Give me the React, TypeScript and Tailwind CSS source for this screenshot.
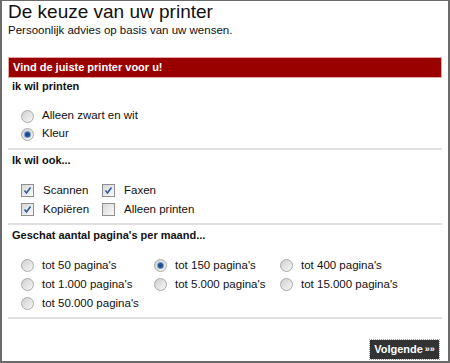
import React from 'react';

const Radio: React.FC<{ checked?: boolean }> = ({ checked }) => (
  <span className="w-[13px] h-[13px] rounded-full border border-[#a9a9a9] bg-gradient-to-br from-[#d0d0d0] to-[#f7f7f7] flex items-center justify-center shrink-0">
    {checked && <span className="w-[5px] h-[5px] rounded-full bg-[#1f4f8a] ring-1 ring-[#7a9ccb]" />}
  </span>
);

const Check: React.FC<{ checked?: boolean }> = ({ checked }) => (
  <span className="w-[13px] h-[13px] border border-[#8f8f8f] bg-gradient-to-br from-[#d8d8d8] to-[#fafafa] flex items-center justify-center shrink-0">
    {checked && (
      <svg width="9" height="9" viewBox="0 0 9 9">
        <path d="M1.5 4.5 L3.5 7 L7.5 1.5" stroke="#2f5b9a" strokeWidth="1.6" fill="none" />
      </svg>
    )}
  </span>
);

const Opt: React.FC<{ label: string; checked?: boolean; box?: boolean; h?: string }> = ({ label, checked, box, h }) => (
  <div className={`flex items-center ${box ? 'gap-[9px]' : 'gap-[8px]'} ${h ?? 'h-[19px]'}`}>
    {box ? <Check checked={checked} /> : <Radio checked={checked} />}
    <span>{label}</span>
  </div>
);

const Divider: React.FC<{ mt: string }> = ({ mt }) => <div className={`h-[2px] bg-[#e0e0e0] mx-[6px] shrink-0 ${mt}`} />;

const Heading: React.FC<{ children: React.ReactNode; mt: string }> = ({ children, mt }) => (
  <div className={`px-[10px] font-bold text-[11px] leading-[14px] ${mt}`}>{children}</div>
);

export default function App() {
  return (
    <div className="w-[450px] h-[363px] overflow-hidden bg-white border-t border-x-2 border-b-2 border-[#6b6b6b] text-[#111] text-[11.5px] font-['Liberation_Sans',Arial,sans-serif] flex flex-col">
      <div className="px-[6px] shrink-0">
        <h1 className="text-[19px] leading-[22px]">De keuze van uw printer</h1>
        <p className="leading-[14px]">Persoonlijk advies op basis van uw wensen.</p>
      </div>
      <div className="mx-[6px] mt-[20px] h-[21px] shrink-0 bg-[#990000] border border-[#e3a5a5] text-white font-bold text-[11px] px-[4px] flex items-center">
        Vind de juiste printer voor u!
      </div>
      <Heading mt="mt-[1px]">ik wil printen</Heading>
      <div className="pl-[19px] pt-[14px] flex flex-col shrink-0">
        <Opt label="Alleen zwart en wit" h="h-[18px]" />
        <Opt label="Kleur" checked h="h-[18px]" />
      </div>
      <Divider mt="mt-[5px]" />
      <Heading mt="mt-[3px]">Ik wil ook...</Heading>
      <div className="pl-[19px] pt-[14px] grid grid-cols-[81px_auto] w-fit shrink-0">
        <Opt box checked label="Scannen" />
        <Opt box checked label="Faxen" />
        <Opt box checked label="Kopiëren" />
        <Opt box label="Alleen printen" />
      </div>
      <Divider mt="mt-[4px]" />
      <Heading mt="mt-[3px]">Geschat aantal pagina's per maand...</Heading>
      <div className="pl-[19px] pt-[14px] grid grid-cols-[133px_126px_auto] w-fit shrink-0">
        <Opt label="tot 50 pagina's" />
        <Opt label="tot 150 pagina's" checked />
        <Opt label="tot 400 pagina's" />
        <Opt label="tot 1.000 pagina's" />
        <Opt label="tot 5.000 pagina's" />
        <Opt label="tot 15.000 pagina's" />
        <Opt label="tot 50.000 pagina's" />
      </div>
      <Divider mt="mt-[4px]" />
      <div className="flex justify-end pr-[9px] pt-[21px] shrink-0">
        <button className="h-[19px] w-[69px] bg-[#333333] outline-1 outline-dotted outline-[#9a9a9a] text-white font-bold text-[11px] leading-none flex items-center justify-center gap-[2px]">
          Volgende <span className="text-[9px]">&raquo;&raquo;</span>
        </button>
      </div>
    </div>
  );
}
